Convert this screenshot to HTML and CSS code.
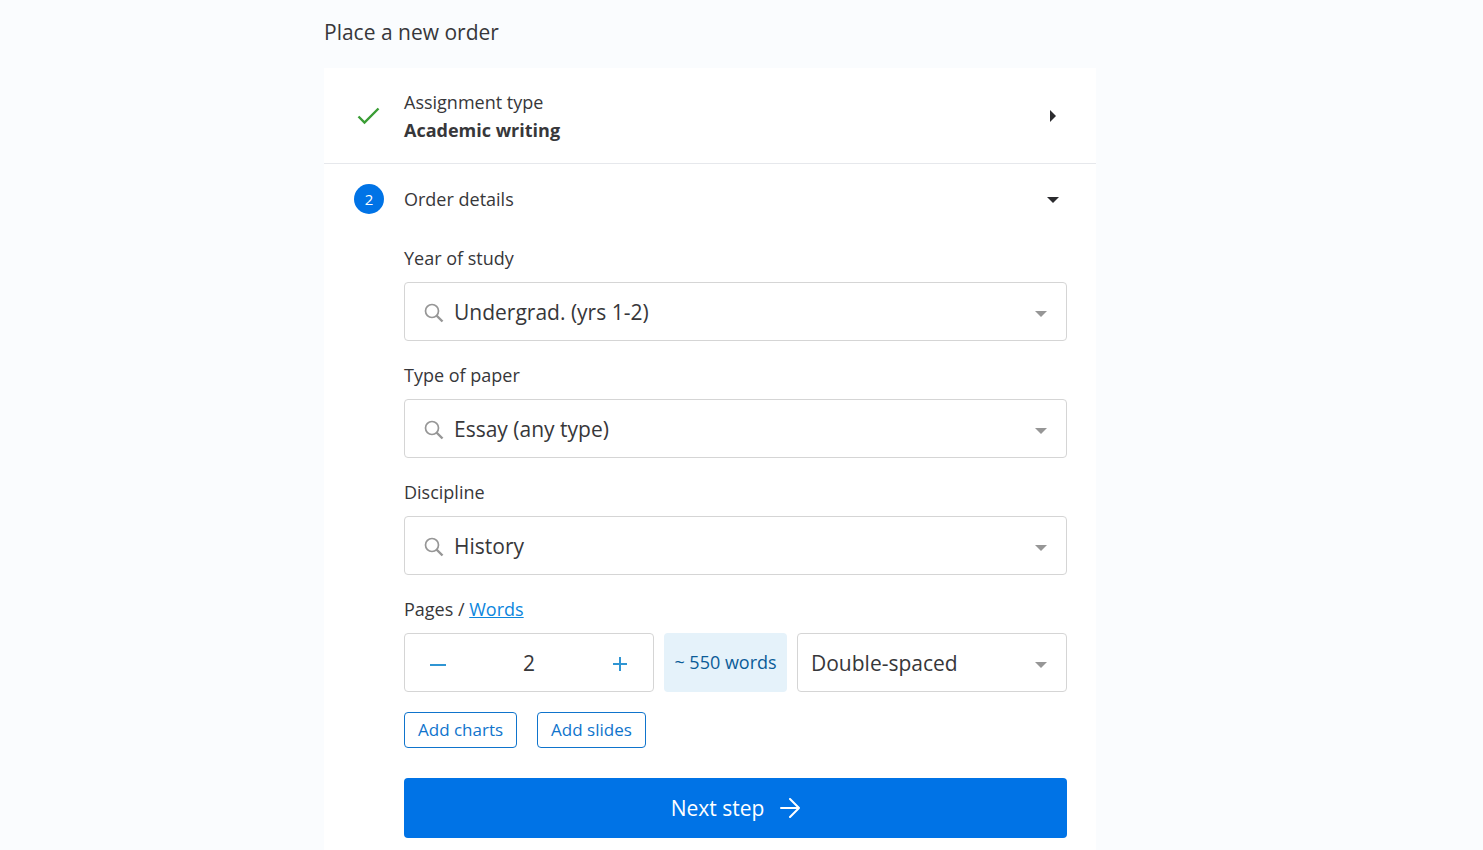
FILE: index.html
```html
<!DOCTYPE html>
<html lang="en">
<head>
    <meta charset="UTF-8">
    <meta name="viewport" content="width=device-width, initial-scale=1.0">
    <title>Place a new order</title>
    <link rel="stylesheet" href="styles.css">
</head>
<body>
    <main class="page">
        <h1>Place a new order</h1>

        <form class="order">
            <button type="button" class="step step-done">
                <span class="step-mark">
                    <svg width="24" height="20" viewBox="0 0 24 20" fill="none" stroke="#3a9d35" stroke-width="2.400"><path d="M1.500 10.500 L7.500 16.500 L21.500 2.500"/></svg>
                </span>
                <span class="step-text">Assignment type<br><strong>Academic writing</strong></span>
                <svg class="step-arrow" width="12" height="12" viewBox="0 0 12 12"><path d="M3 0 L9 6 L3 12 Z" fill="#2b2b2e"/></svg>
            </button>

            <button type="button" class="step" aria-expanded="true">
                <span class="step-mark"><span class="step-number">2</span></span>
                <span class="step-text">Order details</span>
                <svg class="step-arrow" width="12" height="12" viewBox="0 0 12 12"><path d="M0 4 L12 4 L6 10 Z" fill="#2b2b2e"/></svg>
            </button>

            <div class="details">
                <div class="field">
                    <label for="year">Year of study</label>
                    <div class="select-box">
                        <svg class="search" width="20" height="20" viewBox="0 0 20 20" fill="none" stroke="#969696"><circle cx="8" cy="8" r="6.500" stroke-width="1.700"/><path d="M12.500 12.500 L18.500 18.500" stroke-width="2.400"/></svg>
                        <select id="year" class="with-search">
                            <option>Undergrad. (yrs 1-2)</option>
                        </select>
                        <svg class="caret" width="12" height="6" viewBox="0 0 12 6"><path d="M0 0 H12 L6 6 Z" fill="#969696"/></svg>
                    </div>
                </div>

                <div class="field">
                    <label for="paper">Type of paper</label>
                    <div class="select-box">
                        <svg class="search" width="20" height="20" viewBox="0 0 20 20" fill="none" stroke="#969696"><circle cx="8" cy="8" r="6.500" stroke-width="1.700"/><path d="M12.500 12.500 L18.500 18.500" stroke-width="2.400"/></svg>
                        <select id="paper" class="with-search">
                            <option>Essay (any type)</option>
                        </select>
                        <svg class="caret" width="12" height="6" viewBox="0 0 12 6"><path d="M0 0 H12 L6 6 Z" fill="#969696"/></svg>
                    </div>
                </div>

                <div class="field">
                    <label for="discipline">Discipline</label>
                    <div class="select-box">
                        <svg class="search" width="20" height="20" viewBox="0 0 20 20" fill="none" stroke="#969696"><circle cx="8" cy="8" r="6.500" stroke-width="1.700"/><path d="M12.500 12.500 L18.500 18.500" stroke-width="2.400"/></svg>
                        <select id="discipline" class="with-search">
                            <option>History</option>
                        </select>
                        <svg class="caret" width="12" height="6" viewBox="0 0 12 6"><path d="M0 0 H12 L6 6 Z" fill="#969696"/></svg>
                    </div>
                </div>

                <div class="field">
                    <div class="field-title"><label for="pages">Pages</label> / <a href="#words">Words</a></div>
                    <div class="amount">
                        <div class="counter">
                            <button type="button" id="minus" aria-label="Fewer pages">
                                <svg width="16" height="16" viewBox="0 0 16 16" stroke="#2f95d3" stroke-width="2"><path d="M0 10 H16"/></svg>
                            </button>
                            <input type="text" id="pages" value="2" inputmode="numeric">
                            <button type="button" id="plus" aria-label="More pages">
                                <svg width="16" height="16" viewBox="0 0 16 16" stroke="#2f95d3" stroke-width="2"><path d="M1 9 H15 M8 2 V16"/></svg>
                            </button>
                        </div>
                        <output class="word-count" id="wordCount" for="pages">~ 550 words</output>
                        <div class="select-box spacing">
                            <select id="spacing" aria-label="Spacing">
                                <option>Double-spaced</option>
                            </select>
                            <svg class="caret" width="12" height="6" viewBox="0 0 12 6"><path d="M0 0 H12 L6 6 Z" fill="#969696"/></svg>
                        </div>
                    </div>
                </div>

                <div class="extras">
                    <button type="button">Add charts</button>
                    <button type="button">Add slides</button>
                </div>

                <button type="submit" class="next">
                    Next step
                    <svg width="20" height="20" viewBox="0 0 20 20" fill="none" stroke="#fff" stroke-width="2" stroke-linecap="round" stroke-linejoin="round"><path d="M1 10 H19 M10 1 L19 10 L10 19"/></svg>
                </button>
            </div>
        </form>
    </main>

    <script>
        const WORDS_PER_PAGE = 275;
        const pagesEl = document.getElementById('pages');
        const wordCountEl = document.getElementById('wordCount');

        function setPages(n) {
            const pages = Math.max(1, n || 1);
            pagesEl.value = pages;
            wordCountEl.textContent = `~ ${pages * WORDS_PER_PAGE} words`;
        }

        document.getElementById('minus').addEventListener('click', () => setPages(parseInt(pagesEl.value) - 1));
        document.getElementById('plus').addEventListener('click', () => setPages(parseInt(pagesEl.value) + 1));
        pagesEl.addEventListener('change', () => setPages(parseInt(pagesEl.value)));
    </script>
</body>
</html>
```

FILE: styles.css
```css
* {
    box-sizing: border-box;
}
body {
    margin: 0;
    background-color: #fafcfe;
    color: #37373a;
    font-family: 'Segoe UI', 'Open Sans', 'Noto Sans', sans-serif;
    font-size: 18px;
    line-height: 28px;
}
button, input, select {
    font: inherit;
    color: inherit;
}
button {
    cursor: pointer;
}
svg {
    display: block;
    flex-shrink: 0;
}
.page {
    display: flex;
    flex-direction: column;
    max-width: 835px;
    min-height: 100vh;
    margin: 0 auto;
    padding-right: 63px;
}
h1 {
    margin: 0;
    padding: 18px 0 22px;
    font-size: 21px;
    font-weight: 400;
}
.order {
    flex: 1;
    background-color: #fff;
}
.step {
    display: flex;
    align-items: center;
    width: 100%;
    padding: 20px 37px 0 30px;
    border: none;
    background: none;
    text-align: left;
}
.step-done {
    padding-bottom: 19px;
    border-bottom: 1px solid #e6e8ec;
}
.step-mark {
    display: flex;
    justify-content: center;
    width: 30px;
    margin-right: 20px;
}
.step-number {
    width: 30px;
    border-radius: 50%;
    background-color: #0073e6;
    color: #fff;
    font-size: 15px;
    line-height: 30px;
    text-align: center;
}
.step-text {
    flex: 1;
}
.details {
    padding: 30px 29px 12px 80px;
}
.field {
    margin-bottom: 20px;
}
.field > label, .field-title {
    display: block;
    margin-bottom: 10px;
}
a {
    color: #0d86dd;
}
.select-box {
    position: relative;
}
select {
    display: block;
    width: 100%;
    height: 59px;
    padding: 0 40px 0 13px;
    border: 1px solid #d5d5d5;
    border-radius: 4px;
    background-color: #fff;
    appearance: none;
    font-size: 21px;
}
.with-search {
    padding-left: 49px;
}
.search {
    position: absolute;
    top: 21px;
    left: 20px;
}
.caret {
    position: absolute;
    top: 29px;
    right: 20px;
    pointer-events: none;
}
.amount {
    display: flex;
    gap: 10px;
}
.counter {
    display: flex;
    flex: 0 1 250px;
    min-width: 0;
    height: 59px;
    border: 1px solid #d5d5d5;
    border-radius: 4px;
}
.counter button {
    display: flex;
    align-items: center;
    justify-content: center;
    width: 66px;
    padding: 0;
    border: none;
    background: none;
}
.counter input {
    flex: 1;
    min-width: 0;
    padding: 0;
    border: none;
    background: none;
    font-size: 21px;
    text-align: center;
}
.word-count {
    flex: 0 0 123px;
    border-radius: 4px;
    background-color: #e5f2fa;
    color: #0b5c98;
    line-height: 59px;
    text-align: center;
}
.spacing {
    flex: 1;
}
.extras {
    display: flex;
    gap: 20px;
    margin-bottom: 30px;
}
.extras button {
    height: 36px;
    padding: 0 13px;
    border: 1px solid #0f74cc;
    border-radius: 4px;
    background-color: #fff;
    color: #0f74cc;
    font-size: 17px;
    line-height: 34px;
}
.next {
    display: flex;
    align-items: center;
    justify-content: center;
    gap: 16px;
    width: 100%;
    height: 60px;
    border: none;
    border-radius: 4px;
    background-color: #0073e6;
    color: #fff;
    font-size: 21px;
}
```
